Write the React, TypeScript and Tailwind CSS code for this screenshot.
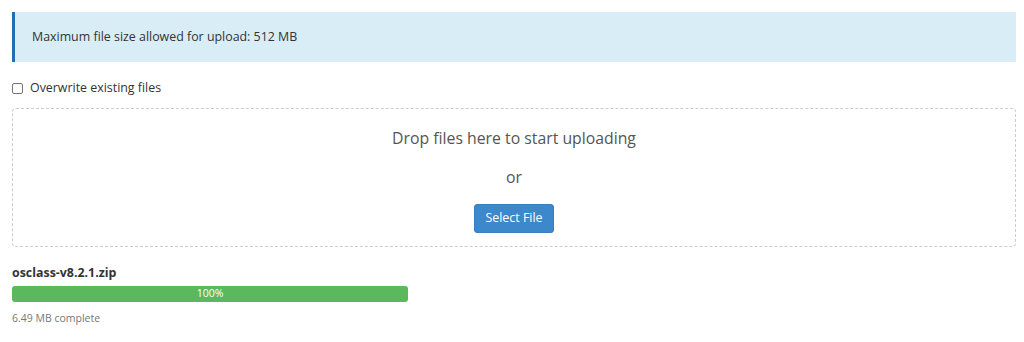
import React from "react";

export default function App() {
  return (
    <div className="w-[1024px] h-[342px] bg-white pl-3 pr-2 pt-3" style={{ fontFamily: '"Open Sans", sans-serif' }}>
      <div className="h-[50px] bg-[#d9edf7] border-l-[3px] border-[#1f6fb2] pl-[17px] flex items-center text-[12.4px] text-[#333]">
        Maximum file size allowed for upload: 512 MB
      </div>
      <label className="mt-[19px] flex items-center h-[15px] text-[12.4px] text-[#333]">
        <input type="checkbox" className="w-[11px] h-[11px] m-0 mr-[7px] appearance-none border border-[#767676] rounded-[2px] bg-white" />
        Overwrite existing files
      </label>
      <div className="mt-[12px] h-[139px] border border-dashed border-[#ccc] rounded-[4px] flex flex-col items-center">
        <div className="mt-[17px] text-[15.8px] leading-[24px] text-[#555]">Drop files here to start uploading</div>
        <div className="mt-[15px] text-[15.8px] leading-[24px] text-[#555]">or</div>
        <button className="mt-[15px] w-[80px] h-[29px] bg-[#3d88ca] border border-[#3a7fbd] rounded-[3px] text-white text-[12.4px]">
          Select File
        </button>
      </div>
      <div className="mt-[17px] text-[12.4px] font-bold leading-[18px] text-[#333]">osclass-v8.2.1.zip</div>
      <div className="mt-[4px] w-[396px] h-[16px] bg-[#5cb85c] rounded-[3px] flex items-center justify-center text-[10.5px] text-white">
        100%
      </div>
      <div className="mt-[9px] text-[10.5px] leading-[15px] text-[#777]">6.49 MB complete</div>
    </div>
  );
}
